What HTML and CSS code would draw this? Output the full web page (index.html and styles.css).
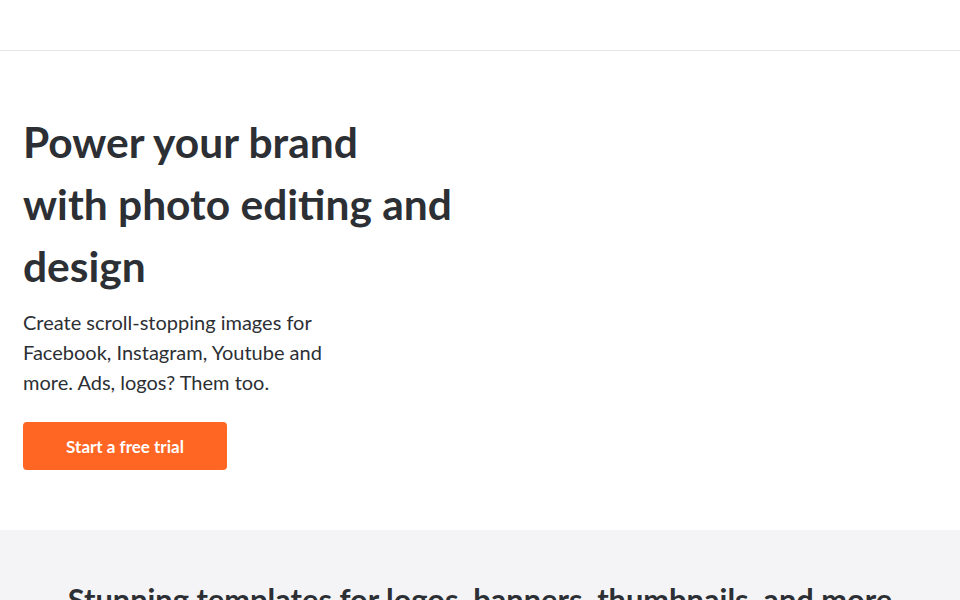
FILE: index.html
```html
<!DOCTYPE html>
<html lang="en">
<head>
<meta charset="utf-8">
<title>Power your brand</title>
<link rel="stylesheet" href="styles.css">
</head>
<body>
<header class="topbar"></header>
<main>
  <section class="hero">
    <h1 class="hero-title">Power your brand<br>with photo editing and design</h1>
    <p class="hero-text">Create scroll-stopping images for Facebook, Instagram, Youtube and more. Ads, logos? Them too.</p>
    <a class="cta" href="#">Start a free trial</a>
  </section>
  <section class="templates">
    <h2 class="templates-title">Stunning templates for logos, banners, thumbnails, and more</h2>
  </section>
</main>
</body>
</html>
```
FILE: styles.css
```css
* { box-sizing: border-box; }
html, body { margin: 0; padding: 0; }
body {
  font-family: Lato, "Noto Sans", sans-serif;
  color: #2c2f34;
  background: #fff;
}
.topbar {
  height: 51px;
  border-bottom: 1px solid #e6e6e9;
  background: #fff;
}
.hero {
  padding: 60px 23px 60px;
  display: flex;
  flex-direction: column;
  align-items: flex-start;
}
.hero-title {
  margin: 0;
  font-size: 42.5px;
  line-height: 62px;
  font-weight: 700;
  max-width: 440px;
}
.hero-text {
  margin: 10px 0 0;
  font-size: 20px;
  line-height: 30px;
  max-width: 330px;
}
.cta {
  margin-top: 25px;
  width: 204px;
  height: 48px;
  display: flex;
  align-items: center;
  justify-content: center;
  background: #ff6624;
  color: #fff;
  font-weight: 700;
  font-size: 17px;
  text-decoration: none;
  border-radius: 4px;
}
.templates {
  background: #f4f4f6;
  padding: 50px 20px 60px;
}
.templates-title {
  margin: 0;
  text-align: center;
  font-size: 30.8px;
  line-height: 40px;
  font-weight: 700;
}
```
